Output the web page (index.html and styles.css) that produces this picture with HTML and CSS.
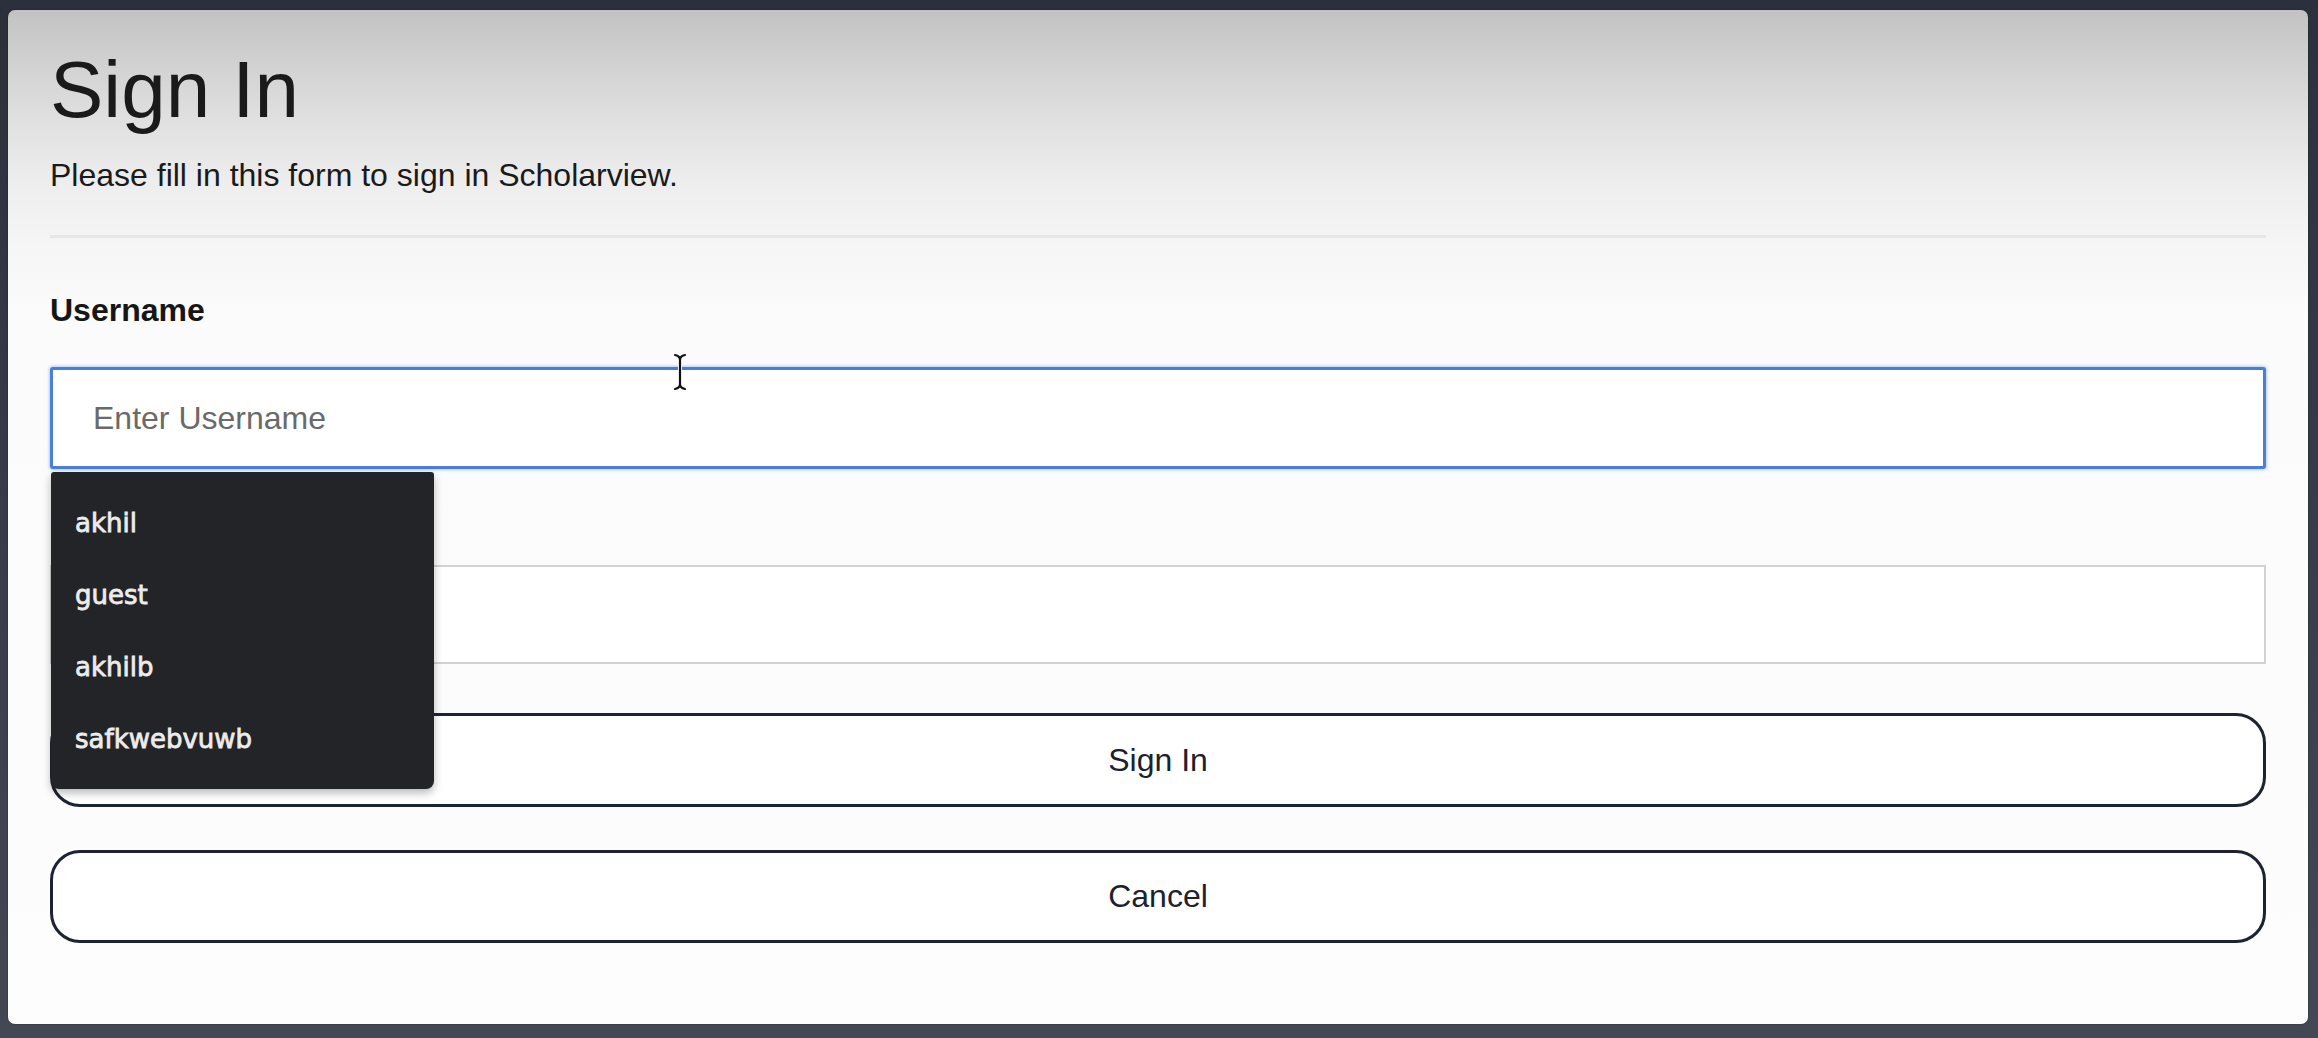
FILE: index.html
```html
<!DOCTYPE html>
<html lang="en">
<head>
<meta charset="utf-8">
<title>Sign In</title>
<link rel="stylesheet" href="styles.css">
</head>
<body>
<div class="card">
  <h1 class="title">Sign In</h1>
  <p class="subtitle">Please fill in this form to sign in Scholarview.</p>
  <hr class="divider">
  <label class="label label-first" for="username">Username</label>
  <div class="field">
    <input class="input input-focused" id="username" type="text" placeholder="Enter Username">
    <svg class="ibeam" width="20" height="38" viewBox="0 0 20 38" aria-hidden="true">
      <path d="M5 2 Q10 3 10 7 V31 Q10 35 5 36 M15 2 Q10 3 10 7 M15 36 Q10 35 10 31" fill="none" stroke="#ffffff" stroke-width="4" stroke-linecap="round"/>
      <path d="M5 2 Q10 3 10 7 V31 Q10 35 5 36 M15 2 Q10 3 10 7 M15 36 Q10 35 10 31" fill="none" stroke="#111111" stroke-width="2.2" stroke-linecap="round"/>
    </svg>
    <div class="dropdown">
      <div class="option">akhil</div>
      <div class="option">guest</div>
      <div class="option">akhilb</div>
      <div class="option">safkwebvuwb</div>
    </div>
  </div>
  <div class="label-spacer" aria-hidden="true"></div>
  <input class="input input-plain" id="password" type="password" aria-label="Password">
  <button class="btn btn-signin" type="button">Sign In</button>
  <button class="btn btn-cancel" type="button">Cancel</button>
</div>
</body>
</html>
```
FILE: styles.css
```css
html, body {
  margin: 0;
  height: 100%;
}

body {
  box-sizing: border-box;
  padding: 10px 10px 14px 8px;
  background: linear-gradient(to bottom, #2c303c 0%, #383c48 50%, #444855 100%);
  font-family: "Liberation Sans", Arial, sans-serif;
  color: #1b1b1b;
  overflow: hidden;
}

.card {
  box-sizing: border-box;
  padding: 34px 42px 81px 42px;
  border-radius: 7px;
  background: linear-gradient(to bottom, #c2c2c2 0px, #d3d3d3 60px, #e0e0e0 110px, #ededed 170px, #f6f6f6 240px, #fbfbfb 300px, #fdfdfd 100%);
  box-shadow: 0 0 2px rgba(0, 0, 0, 0.4);
}

.title {
  margin: 0;
  font-size: 80px;
  line-height: 92px;
  font-weight: normal;
  color: #1a1a1a;
}

.subtitle {
  margin: 21px 0 0;
  font-size: 32px;
  line-height: 37px;
  color: #1a1a1a;
}

.divider {
  margin: 41px 0 0;
  height: 0;
  border: 0;
  border-top: 3px solid #e6e6e6;
}

.label {
  display: block;
  font-size: 32px;
  line-height: 37px;
  font-weight: bold;
  color: #161616;
}

.label-first {
  margin-top: 54px;
}

.label-spacer {
  margin-top: 21px;
  height: 37px;
}

.field {
  position: relative;
  margin-top: 38px;
}

.input {
  display: block;
  width: 100%;
  box-sizing: border-box;
  padding: 0 40px;
  font-family: "Liberation Sans", Arial, sans-serif;
  font-size: 32px;
  color: #222;
  background: #ffffff;
  outline: none;
}

.input::placeholder {
  color: #6a6a6a;
}

.input-focused {
  height: 102px;
  border: 3px solid #4a7fd9;
  border-radius: 3px;
  box-shadow: 0 0 3px 1px rgba(120, 165, 235, 0.55);
}

.input-plain {
  margin-top: 38px;
  height: 99px;
  border: 2px solid #d2d2d2;
  border-radius: 0;
}

.ibeam {
  position: absolute;
  left: 620px;
  top: -14px;
}

.dropdown {
  position: absolute;
  left: 1px;
  top: calc(100% + 3px);
  width: 383px;
  box-sizing: border-box;
  padding: 15px 0 14px;
  background: #232427;
  border-radius: 3px 3px 8px 8px;
  box-shadow: 0 4px 8px rgba(0, 0, 0, 0.28);
  z-index: 2;
}

.option {
  height: 72px;
  line-height: 72px;
  padding-left: 24px;
  font-family: "DejaVu Sans", "Liberation Sans", sans-serif;
  font-size: 26px;
  color: #ececec;
  -webkit-text-stroke: 0.8px #ececec;
}

.btn {
  display: block;
  width: 100%;
  box-sizing: border-box;
  background: #ffffff;
  border: 3px solid #1d2331;
  border-radius: 30px;
  font-family: "Liberation Sans", Arial, sans-serif;
  font-size: 32px;
  color: #1c2130;
  padding: 0;
}

.btn-signin {
  margin-top: 49px;
  height: 94px;
}

.btn-cancel {
  margin-top: 43px;
  height: 93px;
}
```
